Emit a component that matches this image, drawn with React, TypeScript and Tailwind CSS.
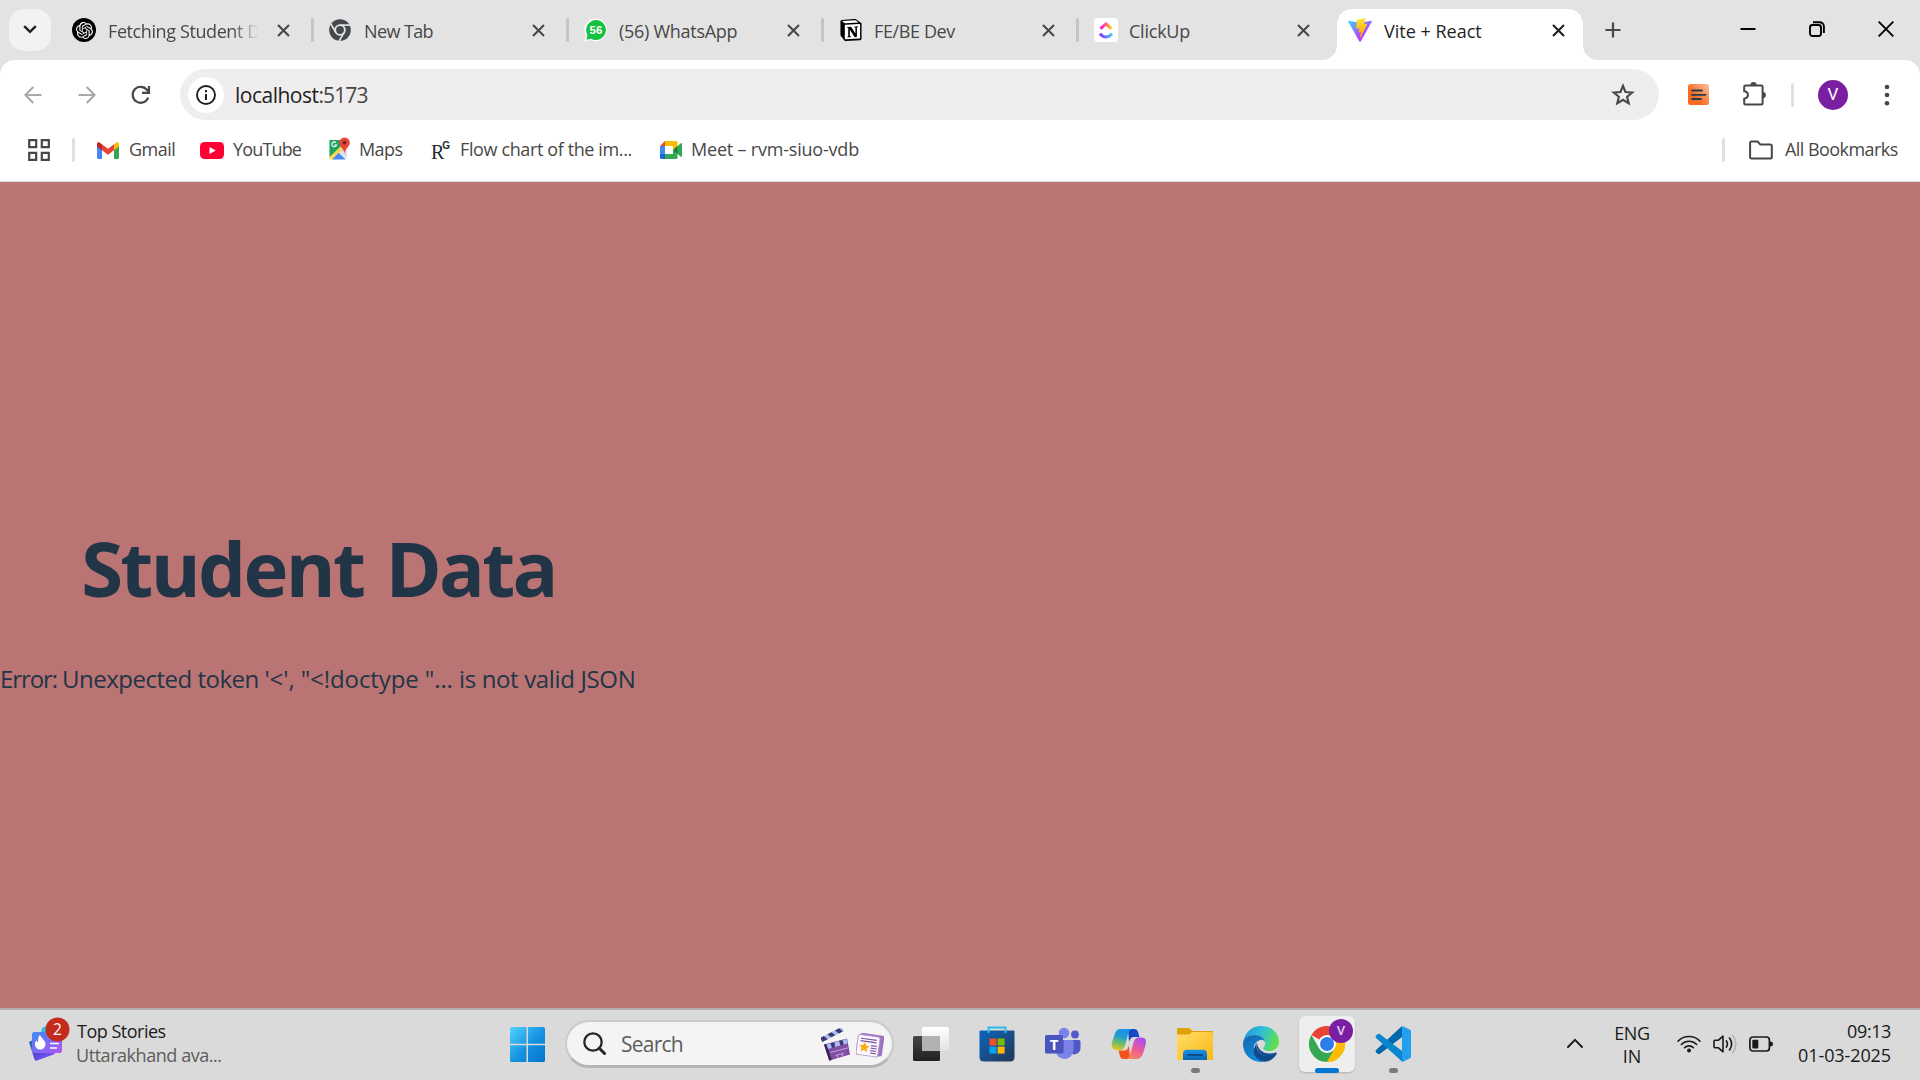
import React from 'react';
import { SiNotion, SiOpenai } from 'react-icons/si';

type IconProps = { className?: string };

/* ---------- Tab favicons ---------- */

const OpenAiFavicon = () => (
  <span className="-ml-[2px] mr-[2px] flex size-6 shrink-0 items-center justify-center rounded-full bg-black text-white">
    <SiOpenai className="size-[17px]" />
  </span>
);

const ChromeMono = () => (
  <svg viewBox="0 0 24 24" className="size-6">
    <circle cx="11" cy="12" r="10.8" fill="#45494d" />
    <circle cx="11" cy="12" r="5.8" fill="#e3e3e3" />
    <circle cx="11" cy="12" r="3.900" fill="#45494d" />
    <g stroke="#e3e3e3" strokeWidth="1.7" fill="none">
      <path d="M11 7.100H22" />
      <path d="M6.800 14.400 1.400 5.200" />
      <path d="M15.200 14.400 9.900 23.400" />
    </g>
  </svg>
);

const WhatsAppFavicon = () => (
  <svg viewBox="0 0 24 24" className="size-6">
    <path d="M12 .4A11.4 11.4 0 1 1 6.6 22L.6 23.5 2 17.6A11.4 11.4 0 0 1 12 .4Z" fill="#fff" />
    <path d="M12 2a10 10 0 1 1-5 18.7L2.4 21.8 3.5 17A10 10 0 0 1 12 2Z" fill="#16c140" />
    <text x="12" y="16" textAnchor="middle" fontFamily="Liberation Sans" fontWeight="700" fontSize="11.5" fill="#fff">
      56
    </text>
  </svg>
);

const NotionFavicon = () => (
  <span className="relative flex size-6 items-center justify-center">
    <span className="absolute inset-x-[2px] inset-y-[2px] rounded-[3px] bg-white" />
    <SiNotion className="relative size-[22px] text-black" />
  </span>
);

const ClickUpFavicon = () => (
  <span className="flex size-6 items-center justify-center rounded-[4px] bg-white">
    <svg viewBox="0 0 24 24" className="size-6">
      <defs>
        <linearGradient id="cuTop" x1="0" x2="1">
          <stop offset="0" stopColor="#ff02f0" />
          <stop offset="1" stopColor="#ffc800" />
        </linearGradient>
        <linearGradient id="cuBottom" x1="0" x2="1">
          <stop offset="0" stopColor="#8930fd" />
          <stop offset="1" stopColor="#49ccf9" />
        </linearGradient>
      </defs>
      <path d="m6.600 10.600 5.400-4.700 5.400 4.700" fill="none" stroke="url(#cuTop)" strokeWidth="3" />
      <path d="M6 15.600c3.400 4.400 8.600 4.400 12 0" fill="none" stroke="url(#cuBottom)" strokeWidth="3" />
    </svg>
  </span>
);

const ViteFavicon = () => (
  <svg viewBox="0 0 256 257" className="size-6">
    <defs>
      <linearGradient id="viteA" x1="-.8%" x2="57.6%" y1="7.7%" y2="78.4%">
        <stop offset="0" stopColor="#41D1FF" />
        <stop offset="1" stopColor="#BD34FE" />
      </linearGradient>
      <linearGradient id="viteB" x1="43.4%" x2="50.3%" y1="2.2%" y2="89%">
        <stop offset="0" stopColor="#FFEA83" />
        <stop offset=".08" stopColor="#FFDD35" />
        <stop offset="1" stopColor="#FFA800" />
      </linearGradient>
    </defs>
    <path
      fill="url(#viteA)"
      d="M255.153 37.938 134.897 252.976c-2.483 4.440-8.862 4.466-11.382.048L.875 37.958c-2.746-4.814 1.371-10.646 6.827-9.670l120.385 21.517a6.537 6.537 0 0 0 2.322-.004l117.867-21.483c5.438-.991 9.574 4.796 6.877 9.620Z"
    />
    <path
      fill="url(#viteB)"
      d="M185.432.063 96.440 17.501a3.268 3.268 0 0 0-2.634 3.014l-5.474 92.456a3.268 3.268 0 0 0 3.997 3.378l24.777-5.718c2.318-.535 4.413 1.507 3.936 3.838l-7.361 36.047c-.495 2.426 1.782 4.500 4.151 3.780l15.304-4.649c2.372-.720 4.652 1.360 4.150 3.788l-11.698 56.621c-.732 3.542 3.979 5.473 5.943 2.437l1.313-2.028 72.516-144.720c1.215-2.423-.880-5.186-3.540-4.672l-25.505 4.922c-2.396.462-4.435-1.770-3.759-4.114l16.646-57.705c.677-2.350-1.370-4.583-3.769-4.113Z"
    />
  </svg>
);

/* ---------- Line icons ---------- */

const CloseIcon = ({ className = '' }: IconProps) => (
  <svg viewBox="0 0 13 13" className={`size-[13px] shrink-0 ${className}`}>
    <path d="m1 1 11 11M12 1 1 12" stroke="currentColor" strokeWidth="2.1" fill="none" />
  </svg>
);

const BackIcon = ({ className = '' }: IconProps) => (
  <svg viewBox="0 0 18 18" className={`size-[18px] shrink-0 ${className}`}>
    <path d="M17.500 9H1.600M9.300 1 1.400 9l7.900 8" stroke="currentColor" strokeWidth="2" fill="none" />
  </svg>
);

const ReloadIcon = () => (
  <svg viewBox="0 0 20 20" className="size-5 shrink-0 text-[#474747]">
    <path d="M17.200 12.600A8 8 0 1 1 15.900 4.700L18 7" stroke="currentColor" strokeWidth="2.200" fill="none" />
    <path d="M18 1v6.900h-7" stroke="currentColor" strokeWidth="2.200" fill="none" />
  </svg>
);

const InfoIcon = () => (
  <svg viewBox="0 0 20 20" className="size-5 text-[#1f1f1f]">
    <circle cx="10" cy="10" r="9" fill="none" stroke="currentColor" strokeWidth="1.900" />
    <path d="M10 9v6M10 5v2.200" stroke="currentColor" strokeWidth="2" />
  </svg>
);

const StarIcon = () => (
  <svg viewBox="0 0 24 24" className="size-6 text-[#474747]">
    <path
      d="m12 2.800 2.500 6.200 6.700.5-5.100 4.300 1.600 6.500-5.700-3.500-5.700 3.500 1.600-6.500L2.800 9.500 9.500 9Z"
      fill="none"
      stroke="currentColor"
      strokeWidth="2.100"
    />
  </svg>
);

const PuzzleIcon = () => (
  <svg viewBox="0 0 26 26" className="size-[26px] text-[#474747]">
    <path
      d="M3.200 5.700q0-1.200 1.200-1.200h16q1.200 0 1.200 1.200v16.600q0 1.200-1.200 1.200h-16q-1.200 0-1.200-1.200v-4.600c5-1 5-6.600 0-7.400Z"
      fill="none"
      stroke="currentColor"
      strokeWidth="2"
    />
    <path d="M9.400 4a3.100 3.100 0 0 1 6.200 0ZM21.800 11a3.100 3.100 0 0 1 0 6.200Z" fill="currentColor" />
  </svg>
);

const AppsIcon = () => (
  <svg viewBox="0 0 22 22" className="size-[22px] text-[#474747]">
    <path
      d="M1.200 1.200h7v7h-7ZM13.800 1.200h7v7h-7ZM1.200 13.800h7v7h-7ZM13.800 13.800h7v7h-7Z"
      fill="none"
      stroke="currentColor"
      strokeWidth="2.200"
    />
  </svg>
);

const FolderIcon = () => (
  <svg viewBox="0 0 24 20" className="h-5 w-6 text-[#474747]">
    <path
      d="M1.100 3q0-1.400 1.400-1.400h6.200l2.600 3h9.900q1.600 0 1.600 1.500v10.800q0 1.500-1.500 1.500H2.600q-1.500 0-1.500-1.500Z"
      fill="none"
      stroke="currentColor"
      strokeWidth="2"
    />
  </svg>
);

/* ---------- Bookmark icons ---------- */

const GmailIcon = () => (
  <svg viewBox="0 0 22 17" className="h-[17px] w-[22px]">
    <path d="M0 3.500 5 7v10H1.500Q0 17 0 15.500Z" fill="#4285f4" />
    <path d="M22 3.500 17 7v10h3.500q1.500 0 1.500-1.500Z" fill="#34a853" />
    <path d="M17 2.300 20 .3q2-.6 2 1.700v2.400L17 8.200Z" fill="#fbbc04" />
    <path d="M5 8.200V2.300l6 4.500 6-4.500v5.900l-6 4.600Z" fill="#ea4335" />
    <path d="M0 2Q0-.2 2 .3l3 2v5.900L0 4.400Z" fill="#c5221f" />
  </svg>
);

const YouTubeIcon = () => (
  <svg viewBox="0 0 24 17" className="h-[17px] w-6">
    <rect width="24" height="17" rx="4.500" fill="#ff0033" />
    <path d="m9.500 5 6.300 3.500-6.300 3.500Z" fill="#fff" />
  </svg>
);

const MapsIcon = () => (
  <svg viewBox="0 0 22 24" className="-mt-[2px] h-6 w-[22px]">
    <path d="M1.500 3H19v19H1.500Z" fill="#e8eaed" />
    <path d="M1.500 3H15l-1 6L1.500 21Z" fill="#1ea362" />
    <path d="M1 20.500 14 8l2.500 2.500L4 22.500H2Z" fill="#ffd84a" />
    <path d="m4 22.500 6.700-6.800 7 6.800Z" fill="#4a89f3" />
    <path d="m12 14.500 5-3.500 2 2v8Z" fill="#dadce0" />
    <path d="M16.500.5a5.200 5.200 0 0 1 5.300 5.300c0 4-4.300 5.200-5.300 10.700-1-5.500-5.300-6.700-5.300-10.700A5.200 5.200 0 0 1 16.500.5Z" fill="#e8453c" />
    <circle cx="16.500" cy="5.700" r="1.900" fill="#7d1f1a" />
    <path d="M8 5.600A2.400 2.400 0 1 0 8.600 8H6.300" fill="none" stroke="#fff" strokeWidth="1.100" />
  </svg>
);

const ResearchGateIcon = () => (
  <span className="flex h-6 w-[22px] items-start text-[#1c2b2b]">
    <span className="mt-[4px] font-['Liberation_Serif',serif] text-[20px] leading-5">R</span>
    <span className="-ml-[2px] mt-[2px] font-['Liberation_Sans',sans-serif] text-[10px] font-bold leading-[11px]">
      G
    </span>
  </span>
);

const MeetIcon = () => (
  <svg viewBox="0 0 22 18" className="h-[18px] w-[22px]">
    <path d="M5 0v5H0Z" fill="#ea4335" />
    <path d="M0 5h5v8H0Z" fill="#4285f4" />
    <path d="M0 13h5v5H1.500Q0 18 0 16.500Z" fill="#1967d2" />
    <path d="M5 0h11q1.500 0 1.500 1.500V6L13 9V5H5Z" fill="#fbbc04" />
    <path d="M5 13h8V9l4.500 3v4.500q0 1.500-1.500 1.500H5Z" fill="#34a853" />
    <path d="m13 9 7.500-6.500Q22 1.500 22 3v12q0 1.500-1.500.5Z" fill="#34a853" />
    <path d="m13 9 4.500-3.800v7.600Z" fill="#188038" />
  </svg>
);

/* ---------- Browser chrome ---------- */

type TabData = { title: React.ReactNode; icon: React.ReactNode; fade?: boolean };

const tabs: TabData[] = [
  { title: <span className="-ml-px tracking-[-0.4px]">Fetching Student D</span>, icon: <OpenAiFavicon />, fade: true },
  { title: <span className="tracking-[-0.6px]">New Tab</span>, icon: <ChromeMono /> },
  { title: <span className="tracking-[-0.28px]">(56) WhatsApp</span>, icon: <WhatsAppFavicon /> },
  { title: <span className="tracking-[-0.38px]">FE/BE Dev</span>, icon: <NotionFavicon /> },
  { title: <span className="tracking-[-0.23px]">ClickUp</span>, icon: <ClickUpFavicon /> },
];

const Tab = ({ title, icon, fade, last }: TabData & { last: boolean }) => (
  <div className="flex h-6 w-[255px] shrink-0 items-center">
    <div className="ml-[15px] flex size-6 items-center justify-center">{icon}</div>
    <div
      className={`ml-[11px] w-[150px] overflow-hidden whitespace-nowrap pt-[2px] text-lg leading-7 text-[#474747] ${
        fade ? '[mask-image:linear-gradient(to_right,black_82%,transparent_100%)]' : ''
      }`}
    >
      {title}
    </div>
    <CloseIcon className="ml-[18px] text-[#474747]" />
    <div className={`ml-auto h-6 w-[3px] rounded-full ${last ? 'bg-transparent' : 'bg-[#c4c4c4]'}`} />
  </div>
);

const TabStrip = () => (
  <div className="flex h-[60px] bg-[#e3e3e3]">
    <div className="ml-[9px] mt-[9px] flex size-[42px] shrink-0 items-center justify-center rounded-[15px] bg-[#f2f2f2]">
      <svg viewBox="0 0 14 9" className="mb-px h-[9px] w-[14px]">
        <path d="m1.200 1.200 5.800 5.600 5.800-5.600" fill="none" stroke="#1f1f1f" strokeWidth="2.500" />
      </svg>
    </div>
    <div className="ml-2 flex pt-[18px]">
      {tabs.map((tab, i) => (
        <Tab key={i} {...tab} last={i === tabs.length - 1} />
      ))}
    </div>
    <div className="relative ml-[3px] mt-[9px] flex h-[51px] w-[246px] shrink-0 items-start rounded-t-[15px] bg-white pt-[9px]">
      <span className="absolute -left-[15px] bottom-0 size-[15px] bg-[radial-gradient(circle_at_0_0,#e3e3e3_14.5px,white_15.5px)]" />
      <span className="absolute -right-[15px] bottom-0 size-[15px] bg-[radial-gradient(circle_at_100%_0,#e3e3e3_14.5px,white_15.5px)]" />
      <div className="ml-[11px]">
        <ViteFavicon />
      </div>
      <div className="-mt-px ml-3 w-[152px] text-lg leading-7 text-[#1f1f1f]">Vite + React</div>
      <CloseIcon className="ml-4 mt-[6px] text-[#1f1f1f]" />
    </div>
    <svg viewBox="0 0 16 16" className="ml-[22px] mt-[22px] size-4 shrink-0">
      <path d="M8 .500v15M.500 8h15" stroke="#474747" strokeWidth="2.200" />
    </svg>
    <div className="ml-auto flex h-[58px] items-center text-black">
      <svg viewBox="0 0 16 16" className="mr-[53px] size-4">
        <path d="M.500 8h15" stroke="currentColor" strokeWidth="2" />
      </svg>
      <svg viewBox="0 0 16 16" className="mr-[53px] size-4">
        <rect x="1" y="4" width="11" height="11" rx="2.500" fill="none" stroke="currentColor" strokeWidth="1.900" />
        <path d="M4 1.200h6.500A4.300 4.300 0 0 1 14.900 5.500V12" fill="none" stroke="currentColor" strokeWidth="1.900" />
      </svg>
      <svg viewBox="0 0 16 16" className="mr-[26px] size-4">
        <path d="m.700.700 14.600 14.600M15.300.700.700 15.300" stroke="currentColor" strokeWidth="1.900" />
      </svg>
    </div>
  </div>
);

const Toolbar = () => (
  <div className="flex h-[69px] items-center rounded-t-[15px] bg-white">
    <BackIcon className="ml-6 text-[#a9a9a9]" />
    <BackIcon className="ml-9 rotate-180 text-[#a9a9a9]" />
    <div className="ml-[35px]">
      <ReloadIcon />
    </div>
    <div className="ml-[29px] flex h-[51px] w-[1479px] items-center rounded-full bg-[#efedee]">
      <div className="ml-2 flex size-9 items-center justify-center rounded-full bg-white">
        <InfoIcon />
      </div>
      <div className="ml-[11px] flex text-[21px] leading-8 text-[#1f1f1f]">
        <span className="tracking-[-0.5px]">localhost</span>
        <span className="tracking-[-0.9px] text-[#474747]">:5173</span>
      </div>
      <div className="ml-auto mr-6">
        <StarIcon />
      </div>
    </div>
    <svg viewBox="0 0 22 22" className="ml-[29px] size-[22px]">
      <defs>
        <linearGradient id="ext" x1="1" y1="0" x2=".3" y2=".6">
          <stop offset="0" stopColor="#fcc0a0" />
          <stop offset="1" stopColor="#fa6a1e" />
        </linearGradient>
      </defs>
      <rect width="21" height="21" rx="2.500" fill="url(#ext)" />
      <path d="M4 6.500h10M4 10.800h13.500M4 15h9" stroke="#1f3f57" strokeWidth="1.800" strokeLinecap="round" />
    </svg>
    <div className="-mt-[2px] ml-[31px]">
      <PuzzleIcon />
    </div>
    <div className="ml-6 h-6 w-[3px] rounded-full bg-[#e0e0e0]" />
    <div className="ml-6 flex size-[30px] items-center justify-center rounded-full bg-[#7b1fa2] font-[Roboto,sans-serif] text-[17px] text-white">
      V
    </div>
    <svg viewBox="0 0 6 22" className="ml-9 h-[22px] w-[6px] fill-[#474747]">
      <circle cx="3" cy="3" r="2.300" />
      <circle cx="3" cy="11" r="2.300" />
      <circle cx="3" cy="19.200" r="2.300" />
    </svg>
  </div>
);

const BookmarksBar = () => (
  <div className="flex h-[53px] items-center border-b border-[#dedede] bg-white pb-[10px] text-lg leading-7 text-[#474747]">
    <div className="ml-7">
      <AppsIcon />
    </div>
    <div className="ml-[22px] h-6 w-[3px] rounded-full bg-[#e0e0e0]" />
    <div className="ml-[22px] flex w-[103px] items-center">
      <GmailIcon />
      <span className="mb-[2px] ml-[10px] tracking-[-0.5px]">Gmail</span>
    </div>
    <div className="flex w-[128px] items-center">
      <YouTubeIcon />
      <span className="mb-[2px] ml-[9px] tracking-[-0.85px]">YouTube</span>
    </div>
    <div className="flex w-[103px] items-center">
      <MapsIcon />
      <span className="mb-[2px] ml-[9px] tracking-[-0.6px]">Maps</span>
    </div>
    <div className="flex w-[229px] items-center">
      <ResearchGateIcon />
      <span className="mb-[2px] ml-[7px] tracking-[-0.38px]">Flow chart of the im...</span>
    </div>
    <div className="flex items-center">
      <MeetIcon />
      <span className="mb-[2px] ml-[9px] tracking-[-0.2px]">Meet – rvm-siuo-vdb</span>
    </div>
    <div className="ml-auto h-6 w-[3px] rounded-full bg-[#e0e0e0]" />
    <div className="ml-6 flex w-[171px] items-center">
      <FolderIcon />
      <span className="mb-[2px] ml-3 tracking-[-0.55px]">All Bookmarks</span>
    </div>
  </div>
);

/* ---------- Taskbar icons ---------- */

const WidgetsIcon = () => (
  <svg viewBox="0 0 44 48" className="h-12 w-11">
    <defs>
      <linearGradient id="wdA" x1="0" y1="0" x2="1" y2="1">
        <stop offset="0" stopColor="#3f8df0" />
        <stop offset=".5" stopColor="#7a6cf5" />
        <stop offset="1" stopColor="#b457f3" />
      </linearGradient>
      <linearGradient id="wdB" x1="0" y1="0" x2="1" y2="1">
        <stop offset="0" stopColor="#1c6f9c" />
        <stop offset=".5" stopColor="#5b45e0" />
        <stop offset="1" stopColor="#8a5cff" />
      </linearGradient>
    </defs>
    <path d="M14 12 20 9l4 12H12Z" fill="#27c3dc" />
    <path d="m1 26 4-2 20 12 2 2-18 6.500q-2 .6-2.600-1.300Z" fill="url(#wdB)" />
    <rect x="4" y="16" width="30" height="21" rx="2.500" fill="url(#wdA)" />
    <path d="M12 19c1 3 5.500 5 5.500 9.300a5.300 5.300 0 0 1-10.600 0c0-2 1-3.300 1.600-4 .3 1.200.8 1.700 1.500 2 .5-3-.3-5 2-7.300Z" fill="#fff" />
    <path d="M22 27.500h9M22 32h7" stroke="#fff" strokeWidth="1.600" />
    <circle cx="29.500" cy="13.500" r="12" fill="#c42b1c" />
    <text x="29.500" y="19" textAnchor="middle" fontFamily="Open Sans" fontSize="15.500" fill="#fff">
      2
    </text>
  </svg>
);

const WindowsIcon = () => (
  <svg viewBox="0 0 35 35" className="size-[35px]">
    <defs>
      <linearGradient id="win" x1="0" y1="0" x2="1" y2="1">
        <stop offset="0" stopColor="#4fd3ff" />
        <stop offset=".55" stopColor="#1591e0" />
        <stop offset="1" stopColor="#0474d0" />
      </linearGradient>
    </defs>
    <path d="M1.500 0H16.500V16.700H0V1.500Q0 0 1.500 0ZM18 0h15.500Q35 0 35 1.500V16.700H18ZM0 18.300h16.500V35h-15Q0 35 0 33.500ZM18 18.300h17v15.200q0 1.500-1.500 1.500H18Z" fill="url(#win)" />
  </svg>
);

const ClapperIcon = () => (
  <svg viewBox="0 0 30 34" className="h-[34px] w-[30px]">
    <g transform="rotate(-27 2 13)">
      <rect x="1" y="9" width="24" height="4.500" fill="#a9bbf5" />
      <path d="M1 9h4l2 4.500H1ZM9 9h4.500l2 4.500H11ZM17.500 9H22l2 4.500h-4.500Z" fill="#40366e" />
    </g>
    <path d="m3 16.500 23-6 3 16-20.500 6Z" fill="#7f4fa3" />
    <path d="m3 16.500 2.500-.6 5.200 16.200-2.500.7Z" fill="#35224f" />
    <path d="m5.500 16.500 20-5.500.9 4.500L7 21Z" fill="#a9bbf5" />
    <path d="m9.500 15.300 4-1 .5 5-3 .8ZM18 13l3.600-1 1 4.800-3 .8Z" fill="#40366e" />
    <path d="m9.500 24.500 17.500-4.700M14.500 27.500l8.500-2.300M16 27.200l.8 3M21 25.800l.8 3" stroke="#c9a4dd" fill="none" />
  </svg>
);

const NewsIcon = () => (
  <svg viewBox="0 0 28 26" className="h-[26px] w-7">
    <g transform="rotate(8 14 13)">
      <rect x="3" y="1" width="24" height="21" rx="2" fill="#9b74bd" />
      <rect x="1" y="3" width="22" height="20" rx="2" fill="#fbf7ff" stroke="#b493cf" strokeWidth="1" />
      <path d="M4 6.500h16M4 9h16M15 12.500h6M15 15h6M15 17.500h6M15 20h6" stroke="#7b549c" strokeWidth="1.100" />
      <path d="m8.500 9.800 1.600 3.200 3.600.5-2.600 2.500.7 3.500-3.300-1.600-3.200 1.600.6-3.500-2.600-2.500 3.600-.5Z" fill="#fbab18" />
    </g>
  </svg>
);

const TaskViewIcon = () => (
  <svg viewBox="0 0 36 34" className="h-[34px] w-9">
    <defs>
      <linearGradient id="tvDark" x1="0" y1="0" x2="0" y2="1">
        <stop offset="0" stopColor="#474747" />
        <stop offset="1" stopColor="#1f1f1f" />
      </linearGradient>
      <linearGradient id="tvLight" x1="0" y1="0" x2="0" y2="1">
        <stop offset="0" stopColor="#ffffff" />
        <stop offset="1" stopColor="#e2e2e2" />
      </linearGradient>
    </defs>
    <rect y="9" width="27" height="25" rx="1.500" fill="url(#tvDark)" />
    <rect x="9" width="27" height="24" rx="1.500" fill="url(#tvLight)" />
    <path d="M9 9h18v15H10.500Q9 24 9 22.500Z" fill="#b2b2b2" />
  </svg>
);

const StoreIcon = () => (
  <svg viewBox="0 0 36 36" className="size-9">
    <defs>
      <linearGradient id="store" x1="0" y1="0" x2="1" y2="1">
        <stop offset="0" stopColor="#0a67bd" />
        <stop offset="1" stopColor="#263455" />
      </linearGradient>
    </defs>
    <path d="M.500 5.500q0-1 1-1h33q1 0 1 1V31q0 4.500-4.500 4.500H5Q.500 35.500.500 31Z" fill="url(#store)" />
    <path d="M9.500 7V1.500h17V7" fill="none" stroke="#2bbdf0" strokeWidth="2" />
    <path d="M10.500 12.500h7v7h-7Z" fill="#f25022" />
    <path d="M18.600 12.500h7v7h-7Z" fill="#7fba00" />
    <path d="M10.500 20.600h7v7h-7Z" fill="#00a4ef" />
    <path d="M18.600 20.600h7v7h-7Z" fill="#ffb900" />
  </svg>
);

const TeamsIcon = () => (
  <svg viewBox="0 0 36 34" className="h-[34px] w-9">
    <circle cx="30" cy="7.500" r="3.900" fill="#5059c9" />
    <path d="M24 13h10q1.500 0 1.500 1.500V21a6.500 6.500 0 0 1-11.500 4Z" fill="#5059c9" />
    <circle cx="19" cy="6" r="5.300" fill="#7b83eb" />
    <path d="M10.500 13H27q1.500 0 1.500 1.500V23a9 9 0 0 1-18 0Z" fill="#7b83eb" />
    <path d="M10.500 13H19v13h-8.500Z" fill="#4a52b0" opacity=".6" />
    <rect x="0" y="8" width="18" height="18.500" rx="1.500" fill="#4b53bc" />
    <text x="9" y="22.500" textAnchor="middle" fontFamily="Open Sans" fontWeight="700" fontSize="15" fill="#fff">
      T
    </text>
  </svg>
);

const CopilotIcon = () => (
  <svg viewBox="0 0 36 32" className="h-8 w-9">
    <defs>
      <linearGradient id="cpA" x1=".5" y1="0" x2=".2" y2="1">
        <stop offset="0" stopColor="#1c92ee" />
        <stop offset=".35" stopColor="#1f9fd0" />
        <stop offset=".7" stopColor="#7dc05a" />
        <stop offset="1" stopColor="#f0c419" />
      </linearGradient>
      <linearGradient id="cpB" x1=".7" y1="0" x2=".2" y2="1">
        <stop offset="0" stopColor="#a64df0" />
        <stop offset=".5" stopColor="#ec5a9a" />
        <stop offset="1" stopColor="#fb8a50" />
      </linearGradient>
    </defs>
    <path d="M17 1h6.500q2.700 0 3.400 2.500L28.500 9H23c-3 0-4 2-5 5Z" fill="#1548c4" />
    <path d="M9.500 1h12c-3.500.5-4 3.500-5 7.500l-2.500 9q-1.300 4.500-5.500 4.500H5.500C1 22-.3 18.500 1.200 13.500L3.700 6Q5.400 1 9.500 1Z" fill="url(#cpA)" />
    <path d="M19 31h-6.500q-2.700 0-3.400-2.500L7.500 22.500H13c3 0 4-2 5-5Z" fill="#f4511e" />
    <path d="M25.500 31h-11c3.500-.5 4.500-3.500 5.500-7.500l2.500-9Q23.800 9.500 28 9.500h2.500c4.500 0 5.300 3.500 3.800 8.500l-2.500 8Q30 31 25.500 31Z" fill="url(#cpB)" />
  </svg>
);

const ExplorerIcon = () => (
  <svg viewBox="0 0 36 34" className="h-[34px] w-9">
    <defs>
      <linearGradient id="fxA" x1="0" y1="0" x2="1" y2="1">
        <stop offset="0" stopColor="#ffdc6b" />
        <stop offset="1" stopColor="#fbb914" />
      </linearGradient>
      <linearGradient id="fxB" x1="0" y1="0" x2="0" y2="1">
        <stop offset="0" stopColor="#1d94e3" />
        <stop offset="1" stopColor="#0863b3" />
      </linearGradient>
    </defs>
    <path d="M0 2.500Q0 1 1.500 1H11q1.500 0 2.500 1l2 2H36v6H0Z" fill="#e0a008" />
    <path d="M0 7.500h11q1.500 0 2.500-1l1.500-1.500h19q2 0 2 2V33H0Z" fill="url(#fxA)" />
    <path d="M6 33v-6.500q0-3.800 3.800-3.800h16.400q3.800 0 3.800 3.800V33Z" fill="url(#fxB)" />
    <path d="M11 28h14" stroke="#0c4c8c" strokeWidth="1.800" strokeLinecap="round" />
  </svg>
);

const EdgeIcon = () => (
  <svg viewBox="0 0 36 36" className="size-9">
    <defs>
      <linearGradient id="edA" x1="0" y1=".2" x2="1" y2=".5">
        <stop offset="0" stopColor="#2397d8" />
        <stop offset=".5" stopColor="#2fc0d6" />
        <stop offset="1" stopColor="#62e14b" />
      </linearGradient>
      <linearGradient id="edB" x1="0" y1="0" x2=".5" y2="1">
        <stop offset="0" stopColor="#1668a8" />
        <stop offset="1" stopColor="#0f8ade" />
      </linearGradient>
    </defs>
    <path d="M.500 15.500C2 6 9 0 18 0c10.500 0 18 7 18 15.500 0 6-4.500 9.500-9.500 9.500-4 0-6.200-1.500-6.200-2.800 0-1 2-1.700 2-5C22.300 12 17 9 11.500 9 6.500 9 2.500 11.500.500 15.500Z" fill="url(#edA)" />
    <path d="M0 18C0 12 5.500 9 11.500 9c6 0 10.500 3.500 10.800 7.500-1-2.300-3-3-4.800-2.500-4.500 1-7.500 5-6.500 10.500 1 6 6 10.500 11 11C9.500 38 0 29 0 18Z" fill="url(#edB)" />
    <path d="M13.800 17c-1.500 6 3 13 11 13 3.500 0 6-1.500 7.700-3 .8-.6 1.600 0 1.200 1C31 32.500 27 35.200 22 35.700 14 35 9.500 28 11 22.500Q12 19 13.800 17Z" fill="#114a8b" />
    <path d="M14 16.500c.5 6 5 11 12.500 11 3.500 0 6-1 7-1.500-1 1.500-4.500 5-9 4.500C17 30 12.500 23 14 16.500Z" fill="#0f4f95" />
  </svg>
);

const ChromeIcon = () => (
  <svg viewBox="0 0 36 36" className="size-9">
    <path d="M18 18 2.400 9A18 18 0 0 1 33.600 9Z" fill="#ea4335" />
    <path d="M18 18V9h15.600A18 18 0 0 1 18 36Z" fill="#fbbc04" />
    <path d="m25.800 22.500-7.800 13.500A18 18 0 0 1 2.400 9l7.800 13.500Z" fill="#34a853" />
    <path d="m25.800 22.500-7.800 13.500A18 18 0 0 0 33.600 9H18Z" fill="#fbbc04" />
    <circle cx="18" cy="18" r="9" fill="#fff" />
    <circle cx="18" cy="18" r="7" fill="#2f7de9" />
  </svg>
);

const VsCodeIcon = () => (
  <svg viewBox="0 0 36 36" className="size-9">
    <path d="M26.500.500 1 24q-1 1 0 2.200l1.800 1.600q1 .8 2.200 0L35 5Z" fill="#0068ad" />
    <path d="M27 35.500 1 12q-1-1 0-2.200l1.800-1.600q1-.8 2.200 0L35 31Z" fill="#0a86d1" />
    <path d="M26.500.500Q27.500 0 28.500.500L35 3.700q1 .5 1 1.700v25.200q0 1.200-1 1.700l-6.500 3.200q-1 .5-2 0 .5-.3.500-1.500V2Q27 .8 26.500.500Z" fill="#22a0ef" />
  </svg>
);

const WifiIcon = () => (
  <svg viewBox="0 0 24 18" className="h-[18px] w-6">
    <g fill="none" stroke="#1a1a1a" strokeWidth="1.600" strokeLinecap="round">
      <path d="M1 6.200c6-6.200 16-6.200 22 0" />
      <path d="M4.300 9.500c4.300-4.300 11.100-4.300 15.400 0" />
      <path d="M7.500 12.700c2.500-2.500 6.500-2.500 9 0" />
    </g>
    <circle cx="12" cy="15.500" r="2" fill="#1a1a1a" />
  </svg>
);

const SpeakerIcon = () => (
  <svg viewBox="0 0 25 20" className="h-5 w-[25px]">
    <g fill="none" stroke="#1a1a1a" strokeWidth="1.600" strokeLinecap="round" strokeLinejoin="round">
      <path d="M1 7.200q0-1 1-1h3.500L10 2.200V17.800L5.500 13.800H2q-1 0-1-1Z" />
      <path d="M13.300 6.800q2.200 3.200 0 6.400" />
      <path d="M16.500 4q4.300 6 0 12" />
      <path d="M19.700 1.200q6.300 8.800 0 17.600" stroke="#b5b5b5" />
    </g>
  </svg>
);

const BatteryIcon = () => (
  <svg viewBox="0 0 24 16" className="h-4 w-6">
    <rect x=".9" y="1" width="19.500" height="14" rx="3" fill="none" stroke="#1a1a1a" strokeWidth="1.700" />
    <path d="M21 5.500q3 0 3 2.500t-3 2.500Z" fill="#1a1a1a" />
    <rect x="3.300" y="3.700" width="6" height="8.700" rx="1" fill="#1a1a1a" />
  </svg>
);

/* ---------- Taskbar ---------- */

type App = { icon: React.ReactNode; state?: 'open' | 'active' };

const apps: App[] = [
  { icon: <TaskViewIcon /> },
  { icon: <StoreIcon /> },
  { icon: <TeamsIcon /> },
  { icon: <CopilotIcon /> },
  { icon: <ExplorerIcon />, state: 'open' },
  { icon: <EdgeIcon /> },
  { icon: <ChromeIcon />, state: 'active' },
  { icon: <VsCodeIcon />, state: 'open' },
];

const TaskbarApp = ({ icon, state }: App) => (
  <div
    className={`relative mx-[5px] flex size-14 items-center justify-center rounded-[6px] ${
      state === 'active' ? 'bg-[#eeeeee] shadow-[0_1px_2px_rgba(0,0,0,0.2)]' : ''
    }`}
  >
    {icon}
    {state === 'active' && (
      <>
        <span className="absolute right-[2px] top-[3px] flex size-6 items-center justify-center rounded-full bg-[#7b1fa2] font-[Roboto,sans-serif] text-[13px] font-medium text-[#e2c9ec]">
          V
        </span>
        <span className="absolute bottom-[-1px] h-[5px] w-6 rounded-full bg-[#0078d4]" />
      </>
    )}
    {state === 'open' && <span className="absolute bottom-[-1px] h-[5px] w-[9px] rounded-full bg-[#7a7a7a]" />}
  </div>
);

const Taskbar = () => (
  <div className="flex h-[72px] border-t-2 border-[#b5adb1] bg-[#dadada] text-lg leading-6 text-[#1a1a1a]">
    <div className="ml-7 mt-[6px]">
      <WidgetsIcon />
    </div>
    <div className="ml-[5px] mt-[9px] w-[433px]">
      <div className="tracking-[-0.5px]">Top Stories</div>
      <div className="-ml-px tracking-[-0.45px] text-[#5c5c5c]">Uttarakhand ava...</div>
    </div>
    <div className="mt-[17px]">
      <WindowsIcon />
    </div>
    <div className="ml-[20px] mt-[10px] flex h-[48px] w-[329px] items-center rounded-full border-2 border-b-[3px] border-[#cbcbcb] border-b-[#b5b5b5] bg-[#f4f4f4]">
      <svg viewBox="0 0 23 23" className="ml-[16px] size-[23px]">
        <circle cx="10" cy="10" r="8.700" fill="none" stroke="#262626" strokeWidth="2.300" />
        <path d="m16.300 16.300 5.200 5.200" stroke="#262626" strokeWidth="3" strokeLinecap="round" />
      </svg>
      <span className="ml-[15px] mt-px text-[21px] tracking-[-0.75px] text-[#5c5c5c]">Search</span>
      <div className="ml-auto flex items-center">
        <div className="mt-[2px]">
          <ClapperIcon />
        </div>
        <div className="ml-[5px] mr-[8px] mt-[4px]">
          <NewsIcon />
        </div>
      </div>
    </div>
    <div className="ml-1 mt-[6px] flex">
      {apps.map((app, i) => (
        <TaskbarApp key={i} {...app} />
      ))}
    </div>
    <div className="ml-auto flex">
      <svg viewBox="0 0 16 10" className="mt-[28px] h-[10px] w-4">
        <path d="m1 9 7-7.200L15 9" fill="none" stroke="#1a1a1a" strokeWidth="1.900" strokeLinecap="round" />
      </svg>
      <div className="ml-[26px] mt-[12px] w-[46px] text-center leading-[23px]">
        <div className="tracking-[-0.3px]">ENG</div>
        <div>IN</div>
      </div>
      <div className="ml-[22px] flex h-[68px] items-center">
        <WifiIcon />
        <div className="ml-3">
          <SpeakerIcon />
        </div>
        <div className="ml-[11px]">
          <BatteryIcon />
        </div>
      </div>
      <div className="mr-[29px] mt-[9px] w-[118px] text-right">
        <div className="tracking-[-0.4px]">09:13</div>
        <div className="tracking-[-0.1px]">01-03-2025</div>
      </div>
    </div>
  </div>
);

/* ---------- Page ---------- */

const StudentPage = () => (
  <main className="flex flex-1 items-start bg-[#bb7474] pt-[344px] text-[#213547]">
    <div className="flex w-[637px] flex-col items-center">
      <h1 className="text-[76px] font-bold leading-[84px] tracking-[-2.65px] [word-spacing:5px]">Student Data</h1>
      <p className="mt-[51px] self-start whitespace-nowrap text-2xl leading-9 tracking-[-0.35px]">
        <span className="tracking-[-1.1px]">Error: </span>
        <span className="tracking-[-0.5px]">Unexpected token </span>
        <span className="tracking-[-0.1px]">'&lt;', "&lt;!doctype "... </span>
        is not valid JSON
      </p>
    </div>
  </main>
);

export default function App() {
  return (
    <div className="flex h-[1080px] w-[1920px] flex-col overflow-hidden bg-[#e3e3e3] font-['Open_Sans','Noto_Sans',sans-serif]">
      <TabStrip />
      <Toolbar />
      <BookmarksBar />
      <StudentPage />
      <Taskbar />
    </div>
  );
}
